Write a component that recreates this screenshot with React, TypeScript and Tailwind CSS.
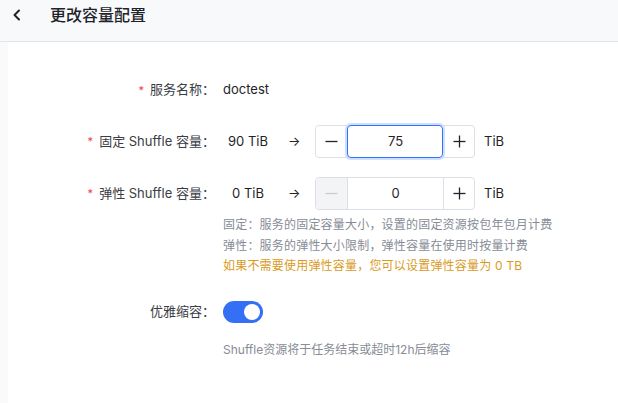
import React from "react";

const font = '"Inter", "Noto Sans CJK SC", sans-serif';

function Label({ text, required = true }: { text: string; required?: boolean }) {
  return (
    <div className="w-[215px] shrink-0 flex justify-end items-center pr-[8px] text-[13px] text-[#3a3d44]">
      {required && <span className="text-[#f04438] mr-[6px] text-[11px] leading-none">*</span>}
      <span>{text}</span>
    </div>
  );
}

function Stepper({ value, focused, minDisabled }: { value: string; focused?: boolean; minDisabled?: boolean }) {
  return (
    <div className="relative flex h-[33px] w-[160px] rounded-[4px] border border-[#dcdfe6] bg-white">
      <button
        className={`w-[32px] flex items-center justify-center rounded-l-[4px] border-r border-[#dcdfe6] ${
          minDisabled ? "bg-[#f3f4f6] text-[#c8ccd3]" : "bg-white text-[#1f2329]"
        }`}
      >
        <svg width="13" height="13" viewBox="0 0 13 13">
          <line x1="0.5" y1="6.5" x2="12.5" y2="6.5" stroke="currentColor" strokeWidth="1.3" />
        </svg>
      </button>
      <div className="flex-1 flex items-center justify-center text-[13px] text-[#1f2329]">{value}</div>
      <button className="w-[31px] flex items-center justify-center border-l border-[#dcdfe6] text-[#1f2329]">
        <svg width="13" height="13" viewBox="0 0 13 13">
          <line x1="0.5" y1="6.5" x2="12.5" y2="6.5" stroke="currentColor" strokeWidth="1.3" />
          <line x1="6.5" y1="0.5" x2="6.5" y2="12.5" stroke="currentColor" strokeWidth="1.3" />
        </svg>
      </button>
      {focused && (
        <div className="absolute left-[31px] right-[31px] top-[-1px] bottom-[-1px] rounded-[4px] border border-[#3370ff] shadow-[0_0_0_2px_#cfe0ff]" />
      )}
    </div>
  );
}

export default function App() {
  return (
    <div className="w-[618px] h-[403px] bg-white overflow-hidden" style={{ fontFamily: font }}>
      <div className="h-[42px] bg-[#f8f9fb] border-b border-[#e3e5e9] flex items-start pt-[4px]">
        <div className="w-[50px] h-[22px] flex items-center pl-[12px]">
          <svg width="10" height="12" viewBox="0 0 10 12">
            <path d="M7 1.5 L2.5 6 L7 10.5" fill="none" stroke="#1f2329" strokeWidth="2" strokeLinecap="round" strokeLinejoin="round" />
          </svg>
        </div>
        <div className="text-[16px] leading-[22px] font-medium text-[#1f2329]">更改容量配置</div>
      </div>
      <div className="flex">
        <div className="w-[8px] h-[361px] bg-[#fafafa]" />
        <div className="flex-1 pt-[38px]">
          <div className="flex items-center h-[20px]">
            <Label text="服务名称：" />
            <div className="text-[13px] text-[#1f2329]">doctest</div>
          </div>

          <div className="flex items-center mt-[25px] h-[33px]">
            <Label text="固定 Shuffle 容量：" />
            <div className="w-[50px] text-center text-[13px] text-[#1f2329]">90 TiB</div>
            <div className="w-[42px] pl-[15px] text-[13px] text-[#1f2329]">→</div>
            <Stepper value="75" focused />
            <div className="ml-[9px] text-[13px] text-[#1f2329]">TiB</div>
          </div>

          <div className="flex items-center mt-[19px] h-[33px]">
            <Label text="弹性 Shuffle 容量：" />
            <div className="w-[50px] text-center text-[13px] text-[#1f2329]">0 TiB</div>
            <div className="w-[42px] pl-[15px] text-[13px] text-[#1f2329]">→</div>
            <Stepper value="0" minDisabled />
            <div className="ml-[9px] text-[13px] text-[#1f2329]">TiB</div>
          </div>

          <div className="ml-[215px] mt-[5px] text-[12px] leading-[20.5px] tracking-[0.2px]">
            <div className="text-[#878c96]">固定：服务的固定容量大小，设置的固定资源按包年包月计费</div>
            <div className="text-[#878c96]">弹性：服务的弹性大小限制，弹性容量在使用时按量计费</div>
            <div className="text-[#d99a1e]">如果不需要使用弹性容量，您可以设置弹性容量为 0 TB</div>
          </div>

          <div className="flex items-center mt-[24px] h-[22px]">
            <Label text="优雅缩容：" required={false} />
            <div className="w-[40px] h-[22px] rounded-full bg-[#3370f5] flex items-center justify-end pr-[3px]">
              <div className="w-[16px] h-[16px] rounded-full bg-white" />
            </div>
          </div>

          <div className="ml-[215px] mt-[17px] text-[12px] leading-[20px] text-[#878c96]">
            Shuffle资源将于任务结束或超时12h后缩容
          </div>
        </div>
      </div>
    </div>
  );
}
